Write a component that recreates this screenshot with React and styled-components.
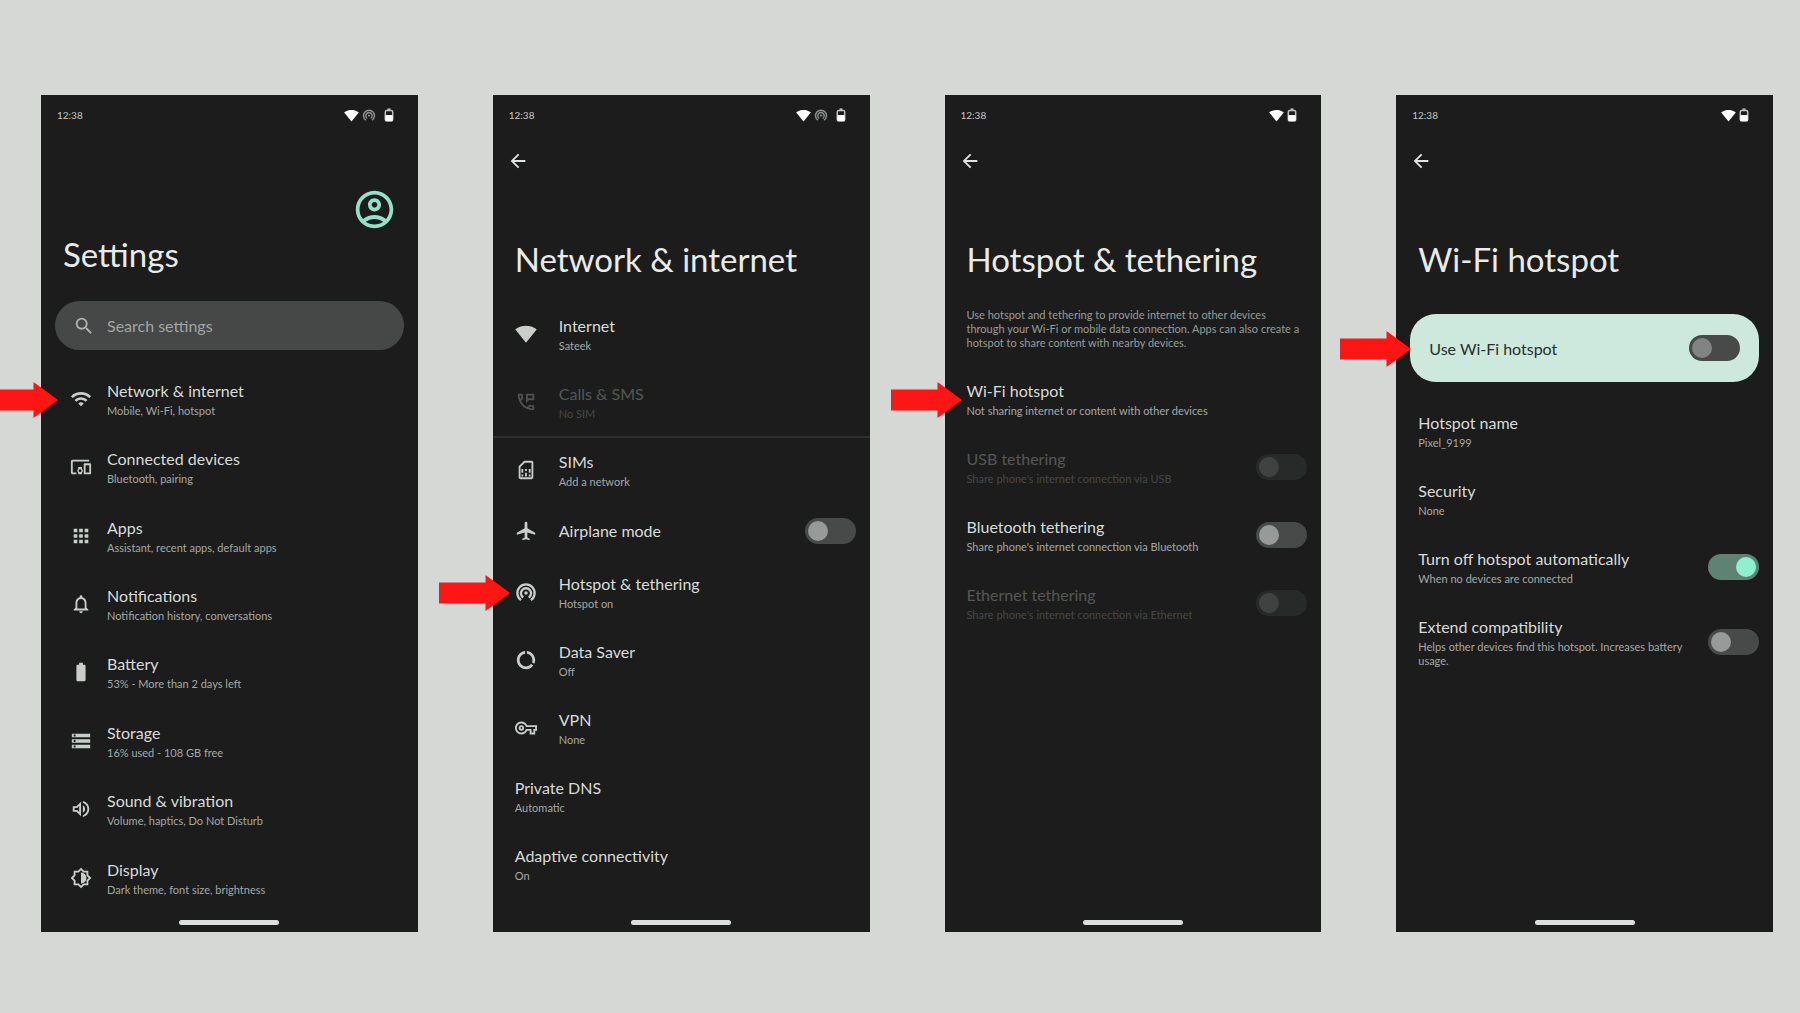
import React from "react";
import styled, { createGlobalStyle, css } from "styled-components";
import {
    MdAirplanemodeActive,
    MdApps,
    MdArrowBack,
    MdBatteryFull,
    MdDataUsage,
    MdDevicesOther,
    MdNotificationsNone,
    MdOutlineAccountCircle,
    MdOutlineBrightnessMedium,
    MdOutlinePermPhoneMsg,
    MdOutlineSimCard,
    MdOutlineVolumeUp,
    MdOutlineVpnKey,
    MdSearch,
    MdSignalWifi4Bar,
    MdStorage,
    MdWifi,
} from "react-icons/md";

const GlobalStyle = createGlobalStyle`
    * {
        box-sizing: border-box;
    }
    body {
        margin: 0;
        background: #d6d8d5;
        font-family: Lato, "Liberation Sans", sans-serif;
    }
`;

const Page = styled.main`
    min-height: 100vh;
    padding: 95px 27px 80px 41px;
    display: grid;
    grid-template-columns: repeat(4, minmax(0, 1fr));
    align-items: start;
    gap: 75px;
`;

const Phone = styled.section`
    position: relative;
    aspect-ratio: 9 / 20;
    min-height: 0;
    display: flex;
    flex-direction: column;
    overflow-x: visible;
    overflow-y: clip;
    background: #1b1c1b;
    color: #d8dbd9;
`;

const StatusBar = styled.div`
    height: 42px;
    padding: 0 24px 2px 16px;
    display: flex;
    flex-shrink: 0;
    align-items: center;
    justify-content: space-between;
    font-size: 10px;
    color: #c4c7c5;
`;

const StatusIcons = styled.div`
    display: flex;
    align-items: center;
    gap: 3px;
    color: #ffffff;
`;

const DimIcon = styled.span`
    display: flex;
    margin-right: 5px;
    color: #8d908e;
`;

const Toolbar = styled.div`
    height: 48px;
    padding: 0 14px;
    display: flex;
    flex-shrink: 0;
    align-items: center;
`;

const BackButton = styled.button`
    display: flex;
    padding: 0;
    border: 0;
    background: none;
    color: #e1e4e2;
    font-size: 22px;
`;

const AvatarBar = styled.div`
    padding: 50px 21px 0;
    display: flex;
    justify-content: flex-end;
`;

const AvatarButton = styled.button`
    display: flex;
    padding: 0;
    border: 0;
    background: none;
    color: #95e0c8;
    font-size: 45px;
`;

const Title = styled.h1`
    margin: 0;
    padding: ${(props) => (props.$tall ? "52px" : "0")} 22px 0;
    font-size: 33px;
    line-height: 44px;
    font-weight: 400;
    color: #e8ebe9;
`;

const SearchBox = styled.label`
    height: 49px;
    margin: 25px 14px 15px;
    padding-left: 18px;
    display: flex;
    flex-shrink: 0;
    align-items: center;
    gap: 12px;
    border-radius: 25px;
    background: #454846;
    color: #aeb2b0;
    font-size: 22px;
`;

const SearchInput = styled.input`
    flex: 1;
    min-width: 0;
    padding: 0;
    border: 0;
    outline: 0;
    background: none;
    font-family: inherit;
    font-size: 16px;
    color: inherit;

    &::placeholder {
        color: #a2a6a4;
        opacity: 1;
    }
`;

const Intro = styled.p`
    margin: 27px 14px 15px 22px;
    font-size: 11px;
    line-height: 14px;
    color: #989c9a;
`;

const List = styled.ul`
    margin: ${(props) => props.$top || "0"} 0 0;
    padding: 0;
    list-style: none;
`;

const ScrollList = styled(List)`
    flex: 1;
    display: flex;
    flex-direction: column;
    margin-bottom: -30px;
`;

const Item = styled.li`
    position: relative;
    flex: 1 0 auto;
    box-shadow: ${(props) => (props.$divided ? "inset 0 2px #2d2f2e" : "none")};
`;

const rowStyle = css`
    padding: ${(props) => (props.$compact ? "14px" : "15px")} 14px ${(props) => (props.$compact ? "14px" : "15px")} 22px;
    display: flex;
    align-items: center;
    color: inherit;
    text-decoration: none;
    opacity: ${(props) => (props.$disabled ? 0.3 : 1)};
`;

const RowLink = styled.a`
    ${rowStyle}
`;

const RowLabel = styled.label`
    ${rowStyle}
`;

const RowIcon = styled.span`
    width: 44px;
    padding-left: ${(props) => (props.$indent ? "7px" : "0")};
    display: flex;
    flex-shrink: 0;
    font-size: 22px;
    color: #c9cecb;
`;

const RowText = styled.span`
    flex: 1;
    min-width: 0;
    padding-right: 14px;
`;

const RowTitle = styled.span`
    display: block;
    font-size: 16px;
    line-height: 22px;
`;

const RowSummary = styled.span`
    display: block;
    margin-top: 2px;
    font-size: 11px;
    line-height: 14px;
    color: #a5a9a7;
`;

const Switch = styled.input`
    appearance: none;
    flex-shrink: 0;
    width: 51px;
    height: 26px;
    margin: 0;
    padding: 3px;
    display: flex;
    border-radius: 13px;
    background: #474a49;

    &::before {
        content: "";
        width: 20px;
        height: 20px;
        border-radius: 50%;
        background: ${(props) => (props.$onCard ? "#828483" : "#969a98")};
    }

    &:checked {
        justify-content: flex-end;
        background: #5f8275;
    }

    &:checked::before {
        background: #8ff0d0;
    }
`;

const SwitchCard = styled.label`
    position: relative;
    min-height: 68px;
    margin: 33px 14px 15px;
    padding: 0 19px;
    display: flex;
    align-items: center;
    justify-content: space-between;
    border-radius: 26px;
    background: #cde9de;
    color: #26302c;
    font-size: 16px;
`;

const ArrowSvg = styled.svg`
    position: absolute;
    top: 50%;
    left: ${(props) => props.$left || "-54px"};
    width: 71px;
    height: 36px;
    margin-top: -17px;
    fill: #fe1614;
`;

const HomeBar = styled.div`
    position: absolute;
    bottom: 7px;
    left: 50%;
    width: 100px;
    height: 5px;
    margin-left: -50px;
    border-radius: 3px;
    background: #dcdedd;
`;

const Arrow = ({ left }) => (
    <ArrowSvg viewBox="0 0 71 36" $left={left} aria-hidden="true">
        <path d="M0 7.500H46.500V0L71 18L46.500 36V28.500H0Z" />
    </ArrowSvg>
);

const HotspotIcon = ({ size = "1em" }) => (
    <svg width={size} height={size} viewBox="0 0 24 24" fill="none" stroke="currentColor" strokeWidth="2.500" aria-hidden="true">
        <path d="M6.600 20.800A9.400 9.400 0 1 1 17.400 20.800" />
        <path d="M9 18A5.500 5.500 0 1 1 15 18" />
        <circle cx="12" cy="13" r="1.900" fill="currentColor" stroke="none" />
    </svg>
);

const BatteryStatus = () => (
    <svg width="10" height="14" viewBox="0 0 10 14" aria-hidden="true">
        <path d="M3.500 1.200H6.500" stroke="#bfc2c0" strokeWidth="1.600" />
        <rect x="1.300" y="2.500" width="7.400" height="10.500" rx="1.500" fill="none" stroke="#bfc2c0" strokeWidth="1.500" />
        <rect x="1.300" y="7" width="7.400" height="6" rx="1" fill="#ffffff" />
    </svg>
);

const Status = ({ tethering }) => (
    <StatusBar>
        <span>12:38</span>
        <StatusIcons>
            <MdSignalWifi4Bar size={15} />
            {tethering && (
                <DimIcon>
                    <HotspotIcon size={14} />
                </DimIcon>
            )}
            <BatteryStatus />
        </StatusIcons>
    </StatusBar>
);

const Header = ({ title }) => (
    <>
        <Toolbar>
            <BackButton type="button" aria-label="Back">
                <MdArrowBack />
            </BackButton>
        </Toolbar>
        <Title $tall>{title}</Title>
    </>
);

const Row = ({ item, indent }) => {
    const Icon = item.icon;
    const hasSwitch = item.on !== undefined;
    const Wrapper = hasSwitch ? RowLabel : RowLink;
    const linkProps = hasSwitch ? {} : { href: "#" };

    return (
        <Item $divided={item.divided}>
            <Wrapper $disabled={item.disabled} $compact={!item.summary} {...linkProps}>
                {(Icon || indent) && (
                    <RowIcon $indent={indent}>
                        {Icon && <Icon />}
                    </RowIcon>
                )}
                <RowText>
                    <RowTitle>{item.title}</RowTitle>
                    {item.summary && <RowSummary>{item.summary}</RowSummary>}
                </RowText>
                {hasSwitch && (
                    <Switch type="checkbox" role="switch" defaultChecked={item.on} disabled={item.disabled} />
                )}
            </Wrapper>
            {item.pointed && <Arrow />}
        </Item>
    );
};

const settings = [
    { title: "Network & internet", summary: "Mobile, Wi-Fi, hotspot", icon: MdWifi, pointed: true },
    { title: "Connected devices", summary: "Bluetooth, pairing", icon: MdDevicesOther },
    { title: "Apps", summary: "Assistant, recent apps, default apps", icon: MdApps },
    { title: "Notifications", summary: "Notification history, conversations", icon: MdNotificationsNone },
    { title: "Battery", summary: "53% - More than 2 days left", icon: MdBatteryFull },
    { title: "Storage", summary: "16% used - 108 GB free", icon: MdStorage },
    { title: "Sound & vibration", summary: "Volume, haptics, Do Not Disturb", icon: MdOutlineVolumeUp },
    { title: "Display", summary: "Dark theme, font size, brightness", icon: MdOutlineBrightnessMedium },
    { title: "Wallpaper & style" },
];

const network = [
    { title: "Internet", summary: "Sateek", icon: MdSignalWifi4Bar },
    { title: "Calls & SMS", summary: "No SIM", icon: MdOutlinePermPhoneMsg, disabled: true },
    { title: "SIMs", summary: "Add a network", icon: MdOutlineSimCard, divided: true },
    { title: "Airplane mode", icon: MdAirplanemodeActive, on: false },
    { title: "Hotspot & tethering", summary: "Hotspot on", icon: HotspotIcon, pointed: true },
    { title: "Data Saver", summary: "Off", icon: MdDataUsage },
    { title: "VPN", summary: "None", icon: MdOutlineVpnKey },
    { title: "Private DNS", summary: "Automatic" },
    { title: "Adaptive connectivity", summary: "On" },
];

const tethering = [
    { title: "Wi-Fi hotspot", summary: "Not sharing internet or content with other devices", pointed: true },
    { title: "USB tethering", summary: "Share phone's internet connection via USB", on: false, disabled: true },
    { title: "Bluetooth tethering", summary: "Share phone's internet connection via Bluetooth", on: false },
    { title: "Ethernet tethering", summary: "Share phone's internet connection via Ethernet", on: false, disabled: true },
];

const hotspot = [
    { title: "Hotspot name", summary: "Pixel_9199" },
    { title: "Security", summary: "None" },
    { title: "Turn off hotspot automatically", summary: "When no devices are connected", on: true },
    { title: "Extend compatibility", summary: "Helps other devices find this hotspot. Increases battery usage.", on: false },
];

const renderRows = (items, indent) =>
    items.map((item) => <Row key={item.title} item={item} indent={indent} />);

const App = () => (
    <>
        <GlobalStyle />
        <Page>
            <Phone>
                <Status tethering />
                <AvatarBar>
                    <AvatarButton type="button" aria-label="Account">
                        <MdOutlineAccountCircle />
                    </AvatarButton>
                </AvatarBar>
                <Title>Settings</Title>
                <SearchBox>
                    <MdSearch />
                    <SearchInput type="search" placeholder="Search settings" aria-label="Search settings" />
                </SearchBox>
                <ScrollList>{renderRows(settings, true)}</ScrollList>
                <HomeBar />
            </Phone>

            <Phone>
                <Status tethering />
                <Header title="Network & internet" />
                <List $top="19px">{renderRows(network)}</List>
                <HomeBar />
            </Phone>

            <Phone>
                <Status />
                <Header title="Hotspot & tethering" />
                <Intro>
                    Use hotspot and tethering to provide internet to other devices
                    <br />
                    through your Wi-Fi or mobile data connection. Apps can also create a
                    hotspot to share content with nearby devices.
                </Intro>
                <List>{renderRows(tethering)}</List>
                <HomeBar />
            </Phone>

            <Phone>
                <Status />
                <Header title="Wi-Fi hotspot" />
                <SwitchCard>
                    Use Wi-Fi hotspot
                    <Switch type="checkbox" role="switch" $onCard />
                    <Arrow left="-70px" />
                </SwitchCard>
                <List>{renderRows(hotspot)}</List>
                <HomeBar />
            </Phone>
        </Page>
    </>
);

export default App;
